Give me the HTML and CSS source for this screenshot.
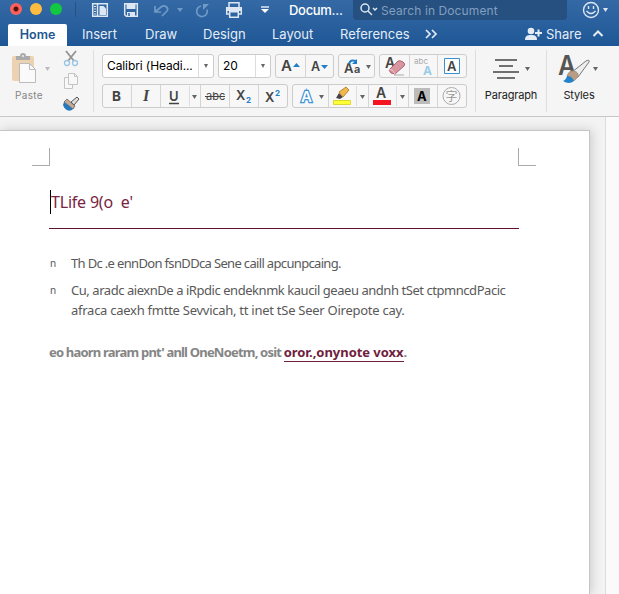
FILE: index.html
```html
<!DOCTYPE html>
<html lang="en">
<head>
<meta charset="utf-8">
<title>Document</title>
<link rel="stylesheet" href="styles.css">
</head>
<body>
<header>
  <div class="titlebar">
    <i class="light red"></i><i class="light amber"></i><i class="light green"></i>
    <svg class="quick" width="212" height="20" viewBox="64 0 212 20" fill="none" stroke="#dce7f3">
      <path d="M75.5 2v15" stroke="#274f80"/>
      <path d="M92.7 3.7h14.6v12.6H92.7zM97.5 3v13" stroke-width="1.5"/>
      <path d="M94 6.5h2M94 9h2M94 11.5h2M94 14h2"/><path d="M99.5 6h4l2.5 2.5V15h-6.5z" fill="#dce7f3" stroke="none"/>
      <path d="M124.7 3.7h12.6v12.6h-11l-1.6-1.6z" stroke-width="1.5"/><path d="M126.5 4h9v5h-9zM127 12h8v4.5h-8z" fill="#dce7f3" stroke="none"/><path d="M129 13v3" stroke="#2d619d" stroke-width="1.5"/>
      <g stroke="#7199c5" stroke-width="1.7"><path d="M155 6v6h6M155 12l6-5c4-3 8 1 6 4l-5 5"/><path d="M201 6a5.300 5.300 0 1 0 6 3.500"/></g>
      <path d="M203 4h6l-6 6zM177 8h6l-3 4z" fill="#7199c5" stroke="none"/>
      <path d="M229 7V2.7h10V7M229 14h-2.3V7.7h14.6V14H239M229.7 11.7h8.6v5.6h-8.6z" stroke-width="1.5"/><path d="M227 8h14v3h-14z" fill="#dce7f3" stroke="none"/>
      <path d="M261 7h8" stroke-width="1.5"/><path d="M261 9h8l-4 4z" fill="#fff" stroke="none"/>
    </svg>
    <b class="doc">Docum...</b>
    <div class="search"><svg width="20" height="18" fill="none" stroke="#dce7f3" stroke-width="1.5"><circle cx="5" cy="8" r="4"/><path d="M8 11l4 4M13 8l2 2 2-2"/></svg><span>Search in Document</span></div>
    <svg class="smile" width="28" height="20" fill="none" stroke="#dce7f3" stroke-width="1.4"><circle cx="9" cy="10" r="7.5"/><path d="M6.5 6v3M11.5 6v3M4.500 11q4.500 5 9 0"/><path d="M21 8h5l-2.500 4z" fill="#dce7f3" stroke="none"/></svg>
  </div>
  <nav>
    <span class="tab active">Home</span><span class="tab insert">Insert</span><span class="tab draw">Draw</span><span class="tab design">Design</span><span class="tab layout">Layout</span><span class="tab refs">References</span>
    <svg class="more" width="14" height="12" fill="none" stroke="#e4edf7" stroke-width="1.7"><path d="M1 2l4 4-4 4M7 2l4 4-4 4"/></svg>
    <svg class="person" width="18" height="14" fill="#e4edf7"><circle cx="6" cy="4" r="3.3"/><path d="M0 13c0-4 2-5 6-5s6 1 6 5zM10 5h7v2h-7zM12.5 2.5h2v7h-2z"/></svg>
    <span class="share">Share</span>
    <svg class="collapse" width="12" height="10" fill="none" stroke="#e4edf7" stroke-width="2"><path d="M1.5 7L6 2.500 10.500 7"/></svg>
  </nav>
</header>
<section class="ribbon">
  <div class="paste">
    <svg width="40" height="32" viewBox="10 51 40 32"><rect x="12" y="56" width="22" height="25" rx="2" fill="#ecd2b1"/><path d="M16 60v-4h4q0-3 3-3t3 3h4v4z" fill="#aaa"/><circle cx="23" cy="56" r="1" fill="#eee"/><path d="M19.5 63.5h10l6 6v13h-16z" fill="#fafafa" stroke="#bbb"/><path d="M29.5 63.5v6h6" fill="none" stroke="#bbb"/><path d="M45 67h5l-2.5 4z" fill="#bbb"/></svg>
    <span>Paste</span>
  </div>
  <svg class="clipboard" width="20" height="66" viewBox="61 48 20 66" fill="none">
    <g stroke-width="1.8"><path d="M66 51l8 10M76 51l-8 10" stroke="#929292"/><g stroke="#9ac5e5" stroke-width="1.3"><circle cx="67" cy="63" r="2.5"/><circle cx="75" cy="63" r="2.5"/></g></g>
    <path d="M68.5 73.5h6l3 3v8h-9zM68.5 77.5h-4v11h8v-4M74.5 73.5v3h3" stroke="#c4c4c4" fill="#f8f8f8"/>
    <path d="M71 102l6-5 2 2-5 6z" fill="#ddd" stroke="#555"/><path d="M67 99l8 7-2 3-9-7z" fill="#c5a993" stroke="#555" stroke-width=".7"/><path d="M64 102l9 7c-3 3-8 2-10-4z" fill="#2478bd"/>
  </svg>
  <div class="font">
    <div class="row">
      <div class="box face"><span>Calibri (Headi...</span><i class="drop"></i></div>
      <div class="box size"><span>20</span><i class="drop"></i></div>
      <div class="box buttons">
        <svg width="29" height="22"><text class="gl" x="5" y="16" font-size="15">A</text><path d="M17 12h7l-3.500-4z" fill="#217ec7"/></svg>
        <svg class="line" width="28" height="22"><text class="gl" x="5" y="15.500" font-size="12.500">A</text><path d="M15 10h7l-3.500 4z" fill="#217ec7"/></svg>
      </div>
      <div class="box buttons">
        <svg width="35" height="22"><text class="gl" x="5" y="18" font-size="13">A</text><text class="gl" x="15" y="18" font-size="11">a</text><path d="M10 9q1-5 7-3" stroke="#217ec7" stroke-width="2" fill="none"/><path d="M18 4v5h-5z" fill="#217ec7"/><path d="M27 10h5l-2.500 4z" fill="#666"/></svg>
      </div>
      <div class="box buttons">
        <svg width="29" height="22"><text class="gl" x="5" y="13" font-size="14">A</text><path d="M14 20h10" stroke="#aaa"/><path d="M9 15L18 6q2-1 5 1t1 4l-9 8q-5 0-6-4z" fill="#d995a0" stroke="#aa6572"/><path d="M9 15q3-2 6 4" fill="none" stroke="#f0cbd1"/></svg>
        <svg class="line" width="28" height="22"><text x="4" y="9" font-size="8" fill="#aaa">abc</text><text x="13" y="20" font-size="12" fill="#9dcbe9" font-weight="700">A</text></svg>
        <svg class="line" width="29" height="22"><path d="M6.500 3.500h15v15h-15z" fill="#fff" stroke="#3791d4"/><text class="gl" x="9" y="15.500" font-size="13">A</text></svg>
      </div>
    </div>
    <div class="row">
      <div class="box buttons">
        <svg width="28" height="22"><text x="9" y="16" font-size="13.500" font-weight="700" fill="#444">B</text></svg>
        <svg class="line" width="29" height="22"><text x="11" y="16" font-size="16" font-family="Liberation Serif" font-style="italic" font-weight="700" fill="#444">I</text></svg>
        <svg class="line" width="40" height="22"><text class="gl" x="8" y="15.500" font-size="13">U</text><path d="M8 18.500h10" stroke="#444" stroke-width="1.300"/><path d="M28.500 1v20" stroke="#ddd"/><path d="M31 10h5l-2.500 4z" fill="#666"/></svg>
        <svg class="line" width="29" height="22"><text x="5" y="15" font-size="11" fill="#444">abc</text><path d="M4 11.500h20" stroke="#444"/></svg>
        <svg class="line" width="29" height="22"><text class="gl" x="6" y="14.500" font-size="13">X</text><text x="16" y="18" font-size="8" font-weight="700" fill="#217ec7">2</text></svg>
        <svg class="line" width="29" height="22"><text class="gl" x="6" y="17" font-size="13">X</text><text x="16" y="11" font-size="8" font-weight="700" fill="#217ec7">2</text></svg>
      </div>
      <div class="box buttons">
        <svg width="35" height="22"><text x="8" y="16.500" font-size="15" font-weight="600" fill="#fff" stroke="#3c93d8" stroke-width="2.500" paint-order="stroke">A</text><path d="M26 10h5l-2.500 4z" fill="#666"/></svg>
        <svg class="line" width="40" height="22"><path d="M4.500 15.500h17v4h-17z" fill="#ffff35" stroke="#ded72e"/><path d="M7 13l3-5 4 4-3 2z" fill="#444"/><path d="M10 7l7-5 3 3-6 7z" fill="#f0b84f" stroke="#ba8735"/><path d="M27.500 1v20" stroke="#ddd"/><path d="M31 10h5l-2.500 4z" fill="#666"/></svg>
        <svg class="line" width="40" height="22"><text class="gl" x="7" y="13" font-size="14">A</text><path d="M4 15h18v5H4z" fill="#f41520"/><path d="M27.500 1v20" stroke="#ddd"/><path d="M31 10h5l-2.500 4z" fill="#666"/></svg>
        <svg class="line" width="29" height="22"><path d="M5 3h16v16H5z" fill="#bbb"/><text x="8" y="15.500" font-size="13" font-weight="700">A</text></svg>
        <svg class="line" width="29" height="22"><circle cx="13.500" cy="11" r="8.500" fill="none" stroke="#aaa"/><text x="7.500" y="15.500" font-size="12" font-family="Noto Sans CJK SC" fill="#999">字</text></svg>
      </div>
    </div>
  </div>
  <div class="tool paragraph"><svg width="52" height="34"><path d="M10 8h22M14 14h14M8 20h26M12 26h18" stroke="#444" stroke-width="1.7"/><path d="M40 15h5l-2.5 4z" fill="#666"/></svg><span>Paragraph</span></div>
  <div class="tool styles"><svg width="44" height="34"><text x="1" y="23" font-size="27" font-weight="600" fill="#555" textLength="18" lengthAdjust="spacingAndGlyphs">A</text><path d="M15 20L29 9q4-2 3 1L21 25z" fill="#eee" stroke="#777"/><path d="M10 24q2-6 7-5 5 1 4 6l-4 4z" fill="#b99c83" stroke="#777" stroke-width=".5"/><path d="M6 29q3-1 4-5 5 0 7 5-5 4-11 0z" fill="#2382ca"/><path d="M36 15h5l-2.500 4z" fill="#666"/></svg><span>Styles</span></div>
</section>
<main>
  <article>
    <div class="corners"><i class="left"></i><i></i></div>
    <h1><span class="caret"></span><span class="title">TLife 9(o  e'</span></h1>
    <ul>
      <li><span class="mark">n</span><span class="ln l1">Th Dc .e ennDon fsnDDca Sene caill apcunpcaing.</span></li>
      <li><span class="mark">n</span><span class="ln l2">Cu, aradc aiexnDe a iRpdic endeknmk kaucil geaeu andnh tSet ctpmncdPacic</span></li>
      <li><span class="mark"></span><span class="ln l3">afraca caexh fmtte Sevvicah, tt inet tSe Seer Oirepote cay.</span></li>
    </ul>
    <p><span class="l4">eo haorn raram pnt' anll OneNoetm, osit </span><a>oror.,onynote voxx</a>.</p>
  </article>
  <aside></aside>
</main>
</body>
</html>
```

FILE: styles.css
```css
* { box-sizing: border-box; }
body { margin: 0; width: 619px; height: 594px; overflow: hidden; display: flex; flex-direction: column; font-family: Inter, "Liberation Sans", sans-serif; }
svg { display: block; flex: none; }
header { height: 46px; background: linear-gradient(#3469a5, #1f5796); color: #e4edf7; flex: none; }
.titlebar { height: 22px; display: flex; align-items: flex-start; padding-left: 10px; }
.light { width: 12px; height: 12px; border-radius: 50%; margin: 3px 8px 0 0; flex: none; }
.red { background: radial-gradient(circle, #54100d 2px, #fc615d 3px); }
.amber { background: #fdbc40; }
.green { background: #13c840; margin-right: 2px; }
.doc { margin-left: 13px; width: 64px; font-size: 13px; font-weight: 500; line-height: 21px; letter-spacing: -.3px; color: #fff; }
.search { width: 214px; height: 20px; background: #25507f; border-radius: 0 0 4px 4px; padding-left: 7px; display: flex; gap: 1px; font-size: 12px; line-height: 21px; letter-spacing: .1px; color: #829fc0; }
.smile { margin-left: 15px; }
nav { height: 24px; display: flex; align-items: center; padding-left: 8px; font-size: 13px; line-height: 22px; }
.tab { white-space: nowrap; flex: none; }
.active { width: 59px; height: 22px; margin: 2px 15px 0 0; background: #fff; color: #22568f; text-align: center; font-weight: 600; border-radius: 2px 2px 0 0; font-size: 12.5px; }
.insert { width: 63px; }
.draw { width: 58px; }
.design { width: 69px; }
.layout { width: 68px; }
.refs { width: 85px; }
.person { margin-left: 86px; }
.share { width: 46px; margin-left: 3px; }
.ribbon { height: 71px; flex: none; display: flex; background: #f5f5f5; border-bottom: 1px solid #c7c7c7; }
.paste { width: 61px; padding: 5px 0 0 10px; font-size: 10px; color: #858585; }
.paste span { display: block; margin: 6px 0 0 5px; line-height: 12px; letter-spacing: .35px; }
.clipboard { margin-top: 2px; }
.font { margin: 4px 0 4px 12px; width: 383px; padding: 4px 0 0 8px; border: solid #dedede; border-width: 0 1px; display: flex; flex-direction: column; gap: 6px; height: 62px; }
.row { display: flex; gap: 4px; }
.box { height: 24px; flex: none; border: 1px solid #ccc; border-radius: 3px; display: flex; background: #f7f7f7; overflow: hidden; }
.face, .size { background: #fff; justify-content: space-between; font-size: 12px; line-height: 22px; padding-left: 4px; }
.face { width: 112px; letter-spacing: -.1px; }
.size { width: 53px; }
.face span { white-space: nowrap; }
.drop { width: 15px; border-left: 1px solid #ddd; display: flex; align-items: center; justify-content: center; }
.drop::after { content: ""; border: solid transparent; border-width: 4px 2.5px 0; border-top-color: #666; }
.line { border-left: 1px solid #d4d4d4; }
.gl { fill: #444; font-weight: 600; }
.tool { display: flex; flex-direction: column; align-items: center; margin-top: 4px; height: 62px; padding-top: 2px; font-size: 11px; color: #222; }
.tool span { line-height: 14px; margin-top: 2px; letter-spacing: -.15px; }
.paragraph { width: 71px; border-right: 1px solid #dedede; }
.styles { width: 64px; }
main { flex: 1; display: flex; justify-content: space-between; background: #f3f3f3; padding-top: 13px; min-height: 0; }
article { width: 590px; background: #fff; border: solid #c5c5c5; border-width: 1px 1px 0 0; box-shadow: 2px 0 10px #ccc; padding-top: 17px; }
aside { width: 14px; margin-top: -13px; background: #fafafa; border-left: 1px solid #ddd; }
.corners { display: flex; justify-content: space-between; width: 504px; margin-left: 32px; }
.corners i { width: 18px; height: 18px; border: solid #aaa; border-width: 0 0 1px 1px; }
.corners .left { border-width: 0 1px 1px 0; }
h1 { margin: 24px 0 0 49px; width: 470px; height: 39px; border-bottom: 1px solid #5d142c; font: 16px/24px "Noto Sans", sans-serif; color: #782440; display: flex; }
.caret { width: 1px; height: 24px; background: #000; margin-left: 1px; flex: none; }
.title { letter-spacing: -.2px; white-space: pre; }
ul { list-style: none; margin: 24px 0 0 49px; padding: 0; font: 13px/20px "Noto Sans", sans-serif; color: #595959; }
li { display: flex; height: 20px; }
li:first-child { margin-bottom: 7px; }
.mark { width: 22px; font-size: 10px; padding-left: 1px; }
.ln { white-space: nowrap; }
.l1 { letter-spacing: -.66px; }
.l2 { letter-spacing: -.45px; }
.l3 { letter-spacing: -.26px; }
p { margin: 22px 0 0 49px; font: 700 13px/20px "Noto Sans", sans-serif; color: #858585; white-space: nowrap; }
.l4 { letter-spacing: -.8px; }
a { color: #70213c; border-bottom: 1px solid #70213c; display: inline-block; line-height: 17px; letter-spacing: -.04px; }
```
